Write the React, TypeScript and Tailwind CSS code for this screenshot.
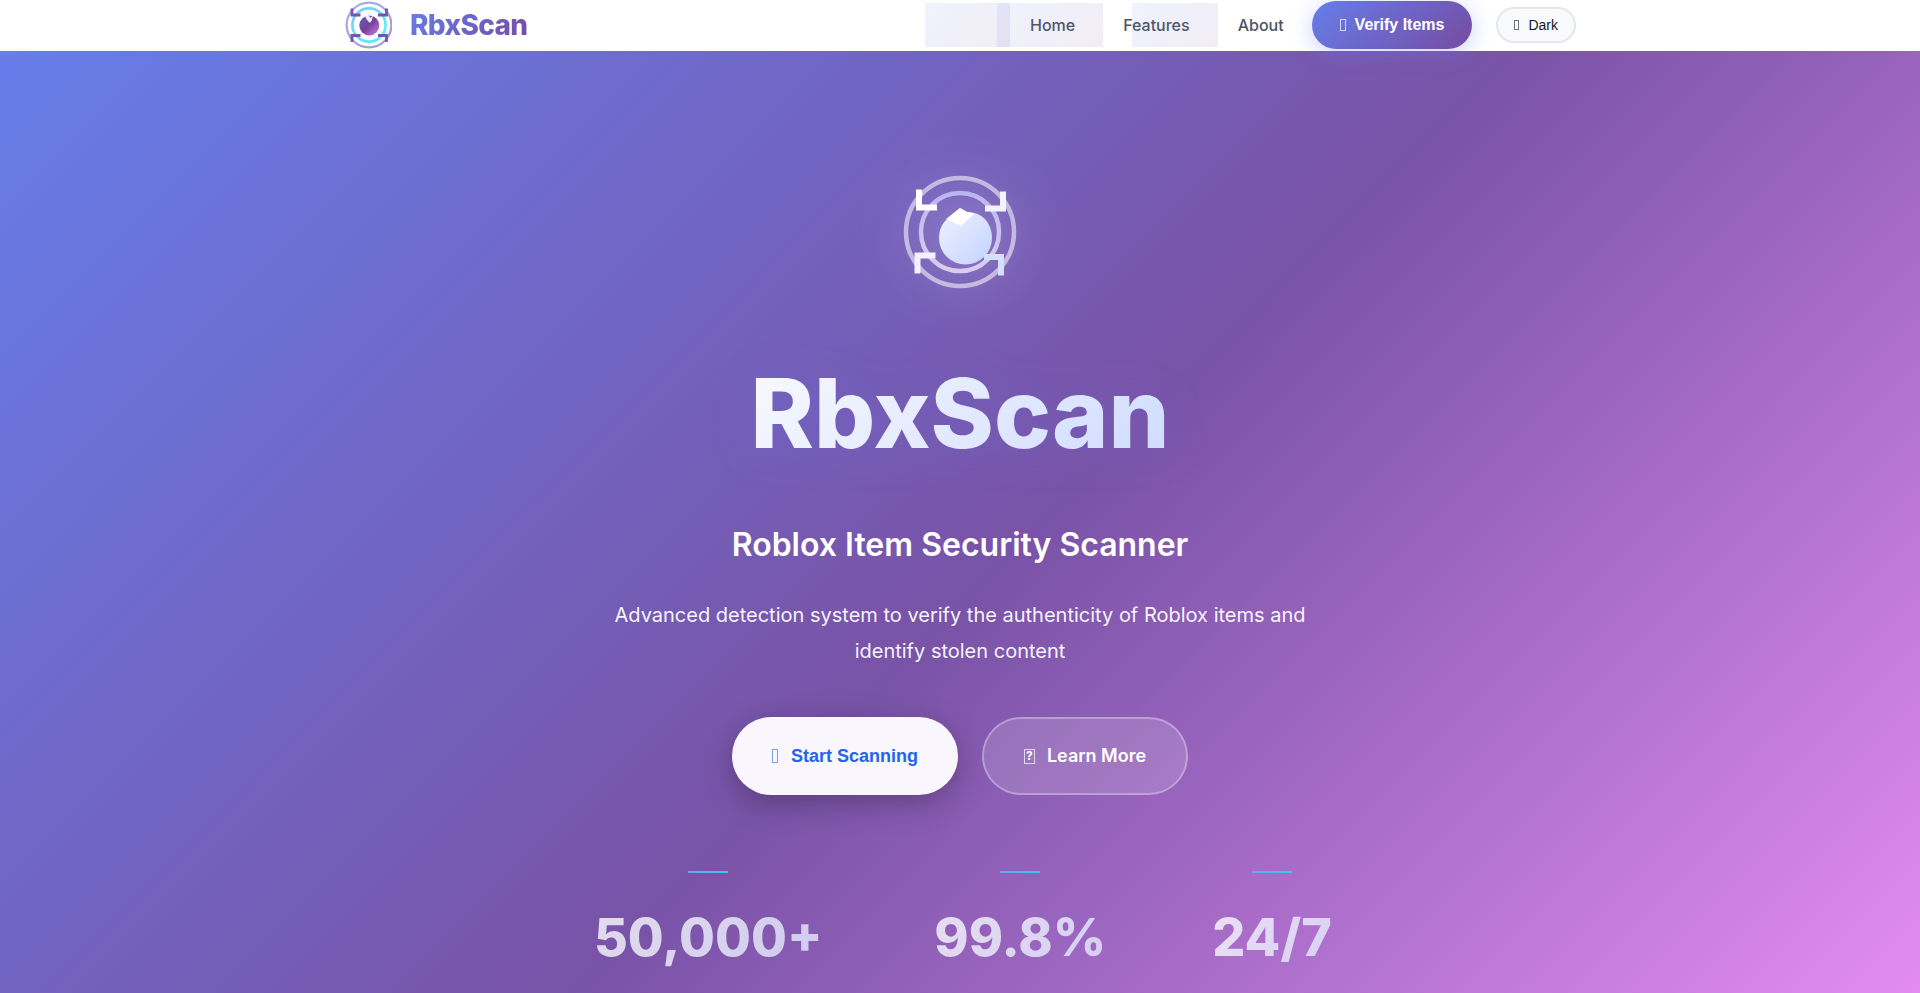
const INTER = "font-['Inter','Liberation_Sans',sans-serif]";
const LIBERATION = "font-['Liberation_Sans',Arial,sans-serif]";

const LINKS = ["Home", "Features", "About"];

const STATS = [
  { value: "50,000+", width: "min-w-60" },
  { value: "99.8%", width: "min-w-48" },
  { value: "24/7", width: "min-w-28" },
];

function NavLogo() {
  return (
    <svg className="size-12" viewBox="-1 0 48 48" fill="none" aria-hidden="true">
      <defs>
        <linearGradient id="navRing" x1="0" y1="0" x2="1" y2="1">
          <stop offset="0" stopColor="#667eea" />
          <stop offset="1" stopColor="#764ba2" />
        </linearGradient>
        <linearGradient id="navScan" x1="0" y1="0" x2="1" y2="1">
          <stop offset="0" stopColor="#4facfe" />
          <stop offset="1" stopColor="#00f2fe" />
        </linearGradient>
        <linearGradient id="navGem" x1="0" y1="0" x2="1" y2="1">
          <stop offset="0" stopColor="#5b62bd" />
          <stop offset="0.5" stopColor="#7a3f9c" />
          <stop offset="1" stopColor="#c58be0" />
        </linearGradient>
      </defs>
      <circle cx="24" cy="24" r="22.4" stroke="url(#navRing)" strokeWidth="2.2" opacity="0.6" />
      <circle cx="24" cy="24" r="16.6" stroke="url(#navScan)" strokeWidth="2.6" opacity="0.7" />
      <path d="M7 7.500V14H15.500M41.500 7.500V14H33M7 41V34.500H15.500M41.500 41V34.500H33" stroke="#6f57b0" strokeWidth="2.800" />
      <circle cx="24.300" cy="24.500" r="10" fill="url(#navGem)" />
      <path d="M20 15.500L24 14L25 17L28 14.500L27 19L25 22L22 19Z" fill="#fff" opacity="0.9" />
    </svg>
  );
}

function HeroLogo() {
  return (
    <svg className="size-[120px] drop-shadow-[0_0_30px_rgba(255,255,255,0.3)]" viewBox="0 0 120 120" fill="none" aria-hidden="true">
      <defs>
        <linearGradient id="heroGem" x1="0" y1="0" x2="1" y2="1">
          <stop offset="0" stopColor="#f0f2ff" />
          <stop offset="1" stopColor="#c3d3ff" />
        </linearGradient>
        <linearGradient id="heroScan" x1="0" y1="0" x2="0" y2="1">
          <stop offset="0" stopColor="#c3c4fa" />
          <stop offset="1" stopColor="#ebdff5" />
        </linearGradient>
      </defs>
      <circle cx="60" cy="60" r="54" stroke="#fff" strokeWidth="4.500" opacity="0.55" />
      <circle cx="60" cy="60" r="39" stroke="url(#heroScan)" strokeWidth="4.500" opacity="0.85" />
      <path d="M60 36L67 40Q78 40 85 47Q92 55 92 66A26.500 26.500 0 0 1 39 66Q39 56 45 49Z" fill="url(#heroGem)" />
      <path d="M60 36L67 40Q71 40 74 42L61 54L46 47Z" fill="#fff" />
      <path d="M19 17.500V35.500H37" stroke="#fff" strokeWidth="6" />
      <path d="M103 19.500V36.500H85" stroke="#f3f2ff" strokeWidth="6" />
      <path d="M17.500 101.500V83.500H35.500" stroke="#f3f0ff" strokeWidth="6" />
      <path d="M101 103.500V85H84" stroke="#d5e0ff" strokeWidth="6" />
    </svg>
  );
}

function Nav() {
  return (
    <header className="relative z-10 border-b border-white/20 bg-white">
      <div className="mx-auto flex max-w-7xl items-center justify-between px-6">
        <a href="#home" className="flex items-center gap-[18px] py-px">
          <NavLogo />
          <span className="bg-linear-135/srgb from-[#667eea] to-[#764ba2] bg-clip-text text-[28px] leading-9 font-extrabold tracking-tight text-transparent">RbxScan</span>
        </a>

        <nav className="flex items-center gap-2">
          {LINKS.map((label) => (
            <a
              key={label}
              href={`#${label.toLowerCase()}`}
              className="relative px-5 py-[10px] text-base font-medium text-[#4b5563] before:absolute before:inset-y-0 before:-left-full before:w-full before:bg-linear-135/srgb before:from-[#667eea]/10 before:to-[#764ba2]/10"
            >
              {label}
            </a>
          ))}
          <button type="button" className={`${LIBERATION} flex h-12 items-center gap-[9px] rounded-full bg-linear-135/srgb from-[#667eea] to-[#764ba2] px-7 text-base font-bold text-white shadow-[0_4px_20px_rgba(102,126,234,0.35)]`}>
            <span className="h-3 w-[6px] border border-white/70" aria-hidden="true" />
            Verify Items
          </button>
          <button type="button" className={`${LIBERATION} ml-4 flex h-9 items-center gap-[9px] rounded-full border-2 border-[#e5e7eb] bg-[#f9fafc] px-4 text-sm text-[#111827]`}>
            <span className="h-[10px] w-[5px] border border-[#111827]/60" aria-hidden="true" />
            Dark
          </button>
        </nav>
      </div>
    </header>
  );
}

export default function App() {
  return (
    <div className={`${INTER} h-screen overflow-hidden`}>
      <Nav />

      <section className="flex flex-col items-center bg-linear-135/srgb from-[#667eea] via-[#7953a7] to-[#f093fb] px-6 pt-[121px] pb-48 text-center">
        <HeroLogo />

        <h1 className="mt-16 bg-linear-135/srgb from-[#f8faff] to-[#cfdaff] bg-clip-text text-8xl leading-[115px] font-extrabold text-transparent drop-shadow-[0_4px_20px_rgba(102,126,234,0.2)]">RbxScan</h1>

        <h2 className="mt-12 text-[32px] leading-[51px] font-semibold text-white">Roblox Item Security Scanner</h2>

        <p className="mt-[27px] max-w-[700px] text-xl leading-9 text-white/95">Advanced detection system to verify the authenticity of Roblox items and identify stolen content</p>

        <div className="mt-12 flex items-center gap-6">
          <button type="button" className={`${LIBERATION} flex h-[78px] items-center gap-[13px] rounded-full bg-[#f9f7fd] px-10 text-lg font-bold text-[#2563eb] shadow-[0_8px_30px_rgba(0,0,0,0.25)]`}>
            <span className="h-[14px] w-[6px] border border-[#2563eb]/60" aria-hidden="true" />
            Start Scanning
          </button>
          <a href="#features" className="flex h-[78px] items-center gap-3 rounded-full border-2 border-white/30 bg-white/15 px-10 text-lg font-semibold text-white">
            <span className="flex h-[15px] w-[11px] items-center justify-center border border-white/70 text-xs leading-3 font-bold" aria-hidden="true">?</span>
            Learn More
          </a>
        </div>

        <div className="mt-[76px] flex gap-24">
          {STATS.map(({ value, width }) => (
            <div key={value} className={`flex flex-col items-center ${width}`}>
              <span className="h-[2px] w-10 bg-linear-90/srgb from-[#6aa5f0] to-[#35c8f0]" />
              <strong className="mt-[31px] bg-linear-135/srgb from-white to-[#e0e7ff] bg-clip-text text-[52px] leading-[67px] font-extrabold text-transparent opacity-80">{value}</strong>
            </div>
          ))}
        </div>
      </section>
    </div>
  );
}
